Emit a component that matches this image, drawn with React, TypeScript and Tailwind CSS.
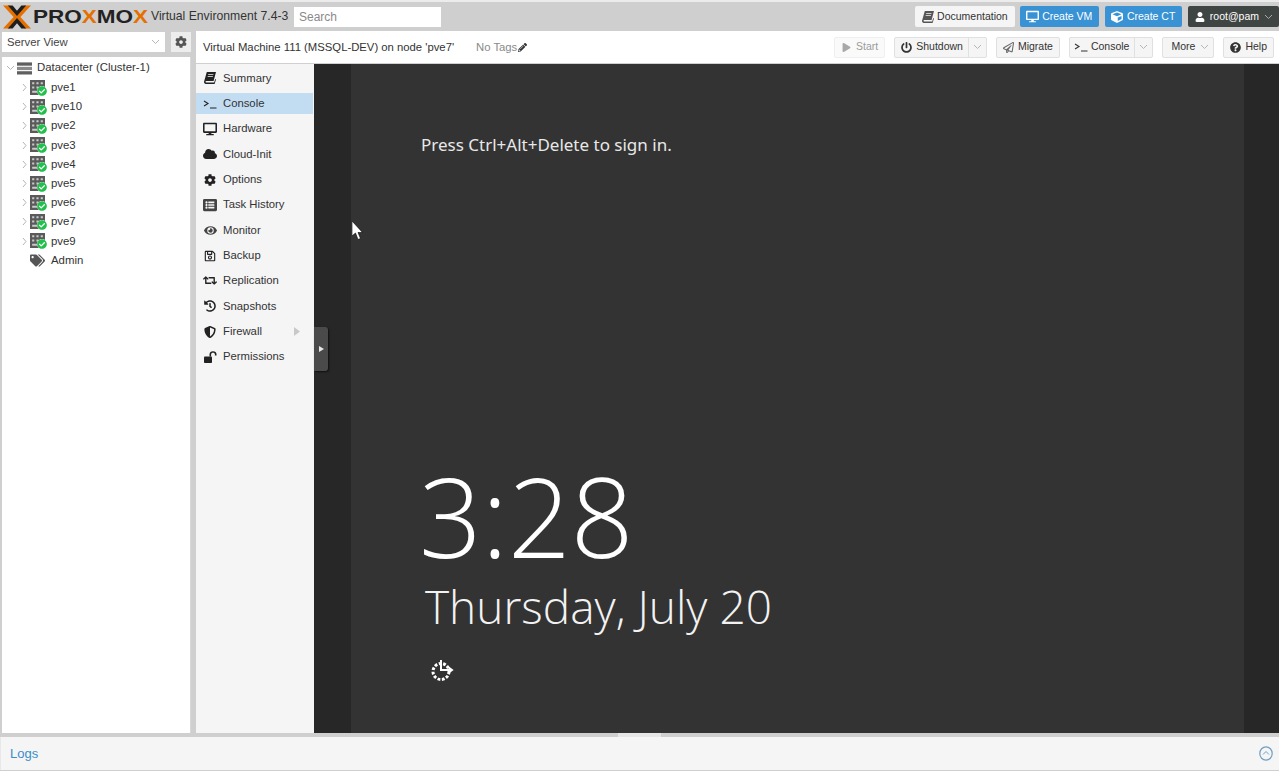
import type { ReactNode } from "react";
import {
  FaCheckCircle,
  FaCloud,
  FaCog,
  FaCube,
  FaDesktop,
  FaEye,
  FaHistory,
  FaListAlt,
  FaPencilAlt,
  FaPlay,
  FaPowerOff,
  FaQuestionCircle,
  FaRegPaperPlane,
  FaRegSave,
  FaRetweet,
  FaShieldAlt,
  FaTags,
  FaUser,
} from "react-icons/fa";

const nodes = ["pve1", "pve10", "pve2", "pve3", "pve4", "pve5", "pve6", "pve7", "pve9"];

function SlantBook({ className = "" }: { className?: string }) {
  return (
    <svg width="12" height="12" viewBox="0 0 12 12" className={className} fill="currentColor">
      <path d="M2.800 0H12l-2.400 9H2.200c-.9 0-.9 1.500 0 1.500h8l1-3.600.8.600L10.600 12H1.800C.5 12-.2 10.800.1 9.500z" />
      <path d="M4.300 2.300h5.200l-.2.800H4.100zM3.800 4.300H9l-.2.800H3.600z" fill="#f5f5f5" />
    </svg>
  );
}

function OpenLock() {
  return (
    <svg width="13" height="12" viewBox="0 0 13 12" fill="currentColor">
      <rect x="0" y="5.500" width="8" height="6.500" rx="0.800" />
      <path d="M5.500 5.500V3.200C5.500 1.400 7 .3 9 .3s3.500 1.100 3.500 2.900v1.300h-1.600V3.300c0-.9-.8-1.500-1.900-1.500s-1.900.6-1.900 1.500v2.200z" />
    </svg>
  );
}

function Prompt() {
  return (
    <svg width="14" height="10" viewBox="0 0 14 10" fill="none" stroke="currentColor" strokeWidth="1.100">
      <path d="M1 2l4 2.500L1 7M7 9h6.500" />
    </svg>
  );
}

const menu: { label: string; icon: ReactNode; active?: boolean; arrow?: boolean }[] = [
  { label: "Summary", icon: <SlantBook /> },
  { label: "Console", icon: <Prompt />, active: true },
  { label: "Hardware", icon: <FaDesktop size={14} /> },
  { label: "Cloud-Init", icon: <FaCloud size={14} /> },
  { label: "Options", icon: <FaCog size={12} /> },
  { label: "Task History", icon: <FaListAlt size={14} className="text-[#444]" /> },
  { label: "Monitor", icon: <FaEye size={13} className="text-[#444]" /> },
  { label: "Backup", icon: <FaRegSave size={12} /> },
  { label: "Replication", icon: <FaRetweet size={15} /> },
  { label: "Snapshots", icon: <FaHistory size={12} /> },
  { label: "Firewall", icon: <FaShieldAlt size={12} />, arrow: true },
  { label: "Permissions", icon: <OpenLock /> },
];

function Chevron({ className = "" }: { className?: string }) {
  return (
    <svg width="9" height="6" viewBox="0 0 9 6" className={className} fill="none" stroke="currentColor">
      <path d="M1 1l3.500 3.500L8 1" />
    </svg>
  );
}

function SideChevron() {
  return (
    <svg width="5" height="9" viewBox="0 0 5 9" fill="none" stroke="#b5b5b5" className="shrink-0">
      <path d="M1 1l3 3.500L1 8" />
    </svg>
  );
}

function Logo() {
  return (
    <div className="flex items-center w-[151px] pl-[3px] shrink-0">
      <svg width="28" height="24" viewBox="0 0 29 24" className="shrink-0">
        <path d="M0 0h7l7.500 8.500L22 0h7L18 12l11 12h-7l-7.500-8.500L7 24H0l11-12z" fill="#e57000" />
        <path d="M5 0h5l4.500 5.500L19 0h5l-9.500 11zM5 24h5l4.500-5.500L19 24h5l-9.500-11z" fill="#1f1f1f" />
      </svg>
      <span className="ml-[2px] font-['Liberation_Sans',sans-serif] font-bold text-[18px] leading-none text-[#222] scale-x-[1.25] origin-left whitespace-nowrap">
        PRO<span className="text-[#e57000]">X</span>MO<span className="text-[#e57000]">X</span>
      </span>
    </div>
  );
}

function TopButton({
  icon,
  label,
  tone,
  chevron,
}: {
  icon: ReactNode;
  label: string;
  tone: "light" | "blue" | "dark";
  chevron?: boolean;
}) {
  const toneClass =
    tone === "blue"
      ? "bg-[#3892d4] text-white"
      : tone === "dark"
        ? "bg-[#3f4542] text-white"
        : "bg-[#f5f5f5] text-[#333]";
  return (
    <div className={`flex items-center h-[21px] pl-[5px] ${chevron ? "pr-[6px]" : "pr-[7px]"} rounded-[2px] text-[10.500px] ${toneClass}`}>
      <span className="w-[15px] mr-[2px] flex justify-center">{icon}</span>
      <span>{label}</span>
      {chevron && <Chevron className="ml-[5px] text-[#aaa]" />}
    </div>
  );
}

function ToolButton({
  icon,
  label,
  split,
  chevron,
  muted,
}: {
  icon?: ReactNode;
  label: string;
  split?: boolean;
  chevron?: boolean;
  muted?: boolean;
}) {
  return (
    <div
      className={`flex items-center h-[21px] border rounded-[2px] text-[10.500px] ${
        muted ? "text-[#9a9a9a] bg-[#fafafa] border-[#efefef]" : "text-[#333] bg-[#f5f5f5] border-[#e0e0e0]"
      } ${icon ? "pl-[4px]" : "pl-[8px]"} ${split || chevron ? "pr-[4px]" : "pr-[6px]"}`}
    >
      {icon && <span className="w-[15px] mr-[2px] flex justify-center">{icon}</span>}
      <span>{label}</span>
      {split && <span className="ml-[5px] mr-[4px] h-[19px] border-l border-[#e0e0e0]" />}
      {chevron && <Chevron className={`text-[#b5b5b5] ${split ? "" : "ml-[5px]"}`} />}
    </div>
  );
}

function NodeIcon() {
  return (
    <span className="relative w-[17px] h-[16px] shrink-0">
      <svg width="15" height="15" viewBox="0 0 14 14">
        <rect width="14" height="14" fill="#5a5a5a" />
        <path d="M2 2h2v2H2zM6 2h2v2H6zM10 2h2v2h-2zM2 6h2v2H2zM6 6h2v2H6zM2 10h5v2H2z" fill="#c9c9c9" />
      </svg>
      <span className="absolute right-0 bottom-0 flex rounded-full bg-white">
        <FaCheckCircle size={10} className="text-[#21bf4b]" />
      </span>
    </span>
  );
}

function Tree() {
  return (
    <div className="flex-1 bg-white border-r border-[#d8d8d8] text-[11.400px] text-[#333] pt-[1px]">
      <div className="flex items-center h-[20px] pl-[4px]">
        <Chevron className="text-[#b5b5b5]" />
        <svg width="15" height="13" viewBox="0 0 16 13" className="ml-[2px]">
          <rect width="16" height="3.500" fill="#5f5f5f" />
          <rect y="4.700" width="16" height="3.500" fill="#8a8a8a" />
          <rect y="9.400" width="16" height="3.500" fill="#5f5f5f" />
        </svg>
        <span className="ml-[5px]">Datacenter (Cluster-1)</span>
      </div>
      {nodes.map((n) => (
        <div key={n} className="flex items-center h-[19.200px] pl-[20px]">
          <SideChevron />
          <span className="ml-[3px] flex">
            <NodeIcon />
          </span>
          <span className="ml-[4px]">{n}</span>
        </div>
      ))}
      <div className="flex items-center h-[19.200px] pl-[28px]">
        <span className="w-[15px] flex text-[#555]">
          <FaTags size={15} />
        </span>
        <span className="ml-[6px]">Admin</span>
      </div>
    </div>
  );
}

function SideMenu() {
  return (
    <div className="w-[118px] shrink-0 bg-[#f5f5f5] pt-[1.500px] text-[11.300px] text-[#333]">
      {menu.map((m) => (
        <div key={m.label} className="flex items-center h-[25.350px]">
          <div className={`flex-1 flex items-center h-[21px] pl-[7px] ${m.active ? "bg-[#c2ddf2] mr-[1px]" : ""}`}>
            <span className="w-[14px] flex justify-center text-[#222]">{m.icon}</span>
            <span className="ml-[6px]">{m.label}</span>
            {m.arrow && (
              <svg width="6" height="9" viewBox="0 0 6 9" className="ml-auto mr-[14px]">
                <path d="M0 0l6 4.500L0 9z" fill="#c8c8c8" />
              </svg>
            )}
          </div>
        </div>
      ))}
    </div>
  );
}

function Console() {
  return (
    <div className="relative flex-1 flex bg-[#272727] min-w-0">
      <div className="ml-[37px] mr-[35px] flex-1 bg-[#333333] flex flex-col pl-[70px] text-white font-['Noto_Sans',sans-serif]">
        <div className="mt-[68px] text-[17px] leading-[25px] text-[#e8e8e8]">Press Ctrl+Alt+Delete to sign in.</div>
        <div className="mt-[296px] text-[110px] leading-[124px] font-['Open_Sans',sans-serif] font-light -ml-[2px]">
          3:28
        </div>
        <div className="mt-[1px] ml-[4px] text-[46px] leading-[56px] font-light font-['Open_Sans',sans-serif] text-[#f2f2f2]">
          Thursday, July 20
        </div>
        <div className="mt-[24px] ml-[9px]">
          <svg width="24" height="24" viewBox="0 0 24 24" fill="none" stroke="#fff" strokeWidth="3">
            <circle cx="11" cy="13.500" r="8" strokeDasharray="2.800 1.600" />
            <path d="M11 2v10h10M18 9l4 3-4 3" strokeWidth="2" />
          </svg>
        </div>
      </div>
      {/* collapse handle over the console */}
      <div className="absolute left-0 top-[263px] w-[14px] h-[44px] bg-[#4a4a4a] rounded-r-[3px] flex items-center justify-center shadow-[1px_1px_2px_rgba(0,0,0,0.6)]">
        <svg width="5" height="6" viewBox="0 0 5 6">
          <path d="M0 0l5 3-5 3z" fill="#e8e8e8" />
        </svg>
      </div>
      {/* mouse pointer */}
      <svg width="11" height="19" viewBox="0 0 11 19" className="absolute left-[38px] top-[157px]">
        <path d="M0 0v15l3.500-3 2.500 6.500 2.500-1-2.500-6h4.500z" fill="#fff" stroke="#000" strokeWidth="0.600" />
      </svg>
    </div>
  );
}

export default function App() {
  return (
    <div className="w-[1279px] h-[771px] overflow-hidden flex flex-col bg-[#cfcfcf] font-['Liberation_Sans',sans-serif] text-[11.300px] text-[#333]">
      <header className="h-[31px] shrink-0 flex items-center border-t-2 border-white/60">
        <Logo />
        <span className="text-[12.200px] text-[#333] whitespace-nowrap w-[143px] shrink-0">Virtual Environment 7.4-3</span>
        <div className="w-[147px] h-[20px] bg-white flex items-center px-[5px] text-[#8a8a8a] text-[12px]">Search</div>
        <div className="ml-auto flex items-center gap-[5.500px]">
          <TopButton tone="light" icon={<SlantBook className="text-[#555]" />} label="Documentation" />
          <TopButton tone="blue" icon={<FaDesktop size={13} />} label="Create VM" />
          <TopButton tone="blue" icon={<FaCube size={12} />} label="Create CT" />
          <TopButton tone="dark" icon={<FaUser size={10} />} label="root@pam" chevron />
        </div>
      </header>

      <div className="flex-1 flex min-h-0">
        <aside className="w-[196px] shrink-0 flex flex-col pl-[2px] pr-[5px]">
          <div className="flex items-center h-[20px] mt-[1px] shrink-0">
            <div className="w-[163px] h-full bg-white flex items-center px-[5px] text-[#444]">
              Server View
              <Chevron className="ml-auto text-[#b5b5b5]" />
            </div>
            <div className="ml-[6px] flex-1 h-full bg-[#ededed] flex items-center justify-center">
              <FaCog size={12} className="text-[#555]" />
            </div>
          </div>
          <div className="h-[5px] shrink-0" />
          <Tree />
        </aside>

        <main className="flex-1 flex flex-col min-w-0">
          <div className="h-[33px] shrink-0 bg-white flex items-center pl-[7px] pr-[5px] border-b border-[#d0d0d0]">
            <span className="w-[273px] shrink-0">Virtual Machine 111 (MSSQL-DEV) on node 'pve7'</span>
            <span className="text-[#8a8a8a]">No Tags</span>
            <FaPencilAlt size={9} className="ml-[1px] text-[#333]" />
            <div className="ml-auto flex items-center gap-[9px]">
              <ToolButton muted label="Start" icon={<FaPlay size={9} className="text-[#a8a8a8]" />} />
              <ToolButton label="Shutdown" split chevron icon={<FaPowerOff size={11} />} />
              <ToolButton label="Migrate" icon={<FaRegPaperPlane size={11} className="text-[#666]" />} />
              <ToolButton label="Console" split chevron icon={<Prompt />} />
              <ToolButton label="More" chevron />
              <ToolButton label="Help" icon={<FaQuestionCircle size={11} />} />
            </div>
          </div>
          <div className="flex-1 flex min-h-0">
            <SideMenu />
            <Console />
          </div>
        </main>
      </div>

      <div className="h-[4px] shrink-0 flex justify-center">
        <div className="w-[43px] h-full bg-[#e6e6e6]" />
      </div>
      <footer className="h-[33px] mb-[1px] shrink-0 bg-[#f5f5f5] flex items-center pl-[9px] pr-[6px] border-l border-[#e8e8e8]">
        <span className="text-[13px] text-[#3b8ec9]">Logs</span>
        <svg width="14" height="15" viewBox="0 0 14 15" fill="none" stroke="#6f9fc0" className="ml-auto">
          <ellipse cx="7" cy="7.500" rx="6.200" ry="6.700" strokeWidth="1.200" />
          <path d="M4 8.500l3-3 3 3" strokeWidth="1" />
        </svg>
      </footer>
    </div>
  );
}
